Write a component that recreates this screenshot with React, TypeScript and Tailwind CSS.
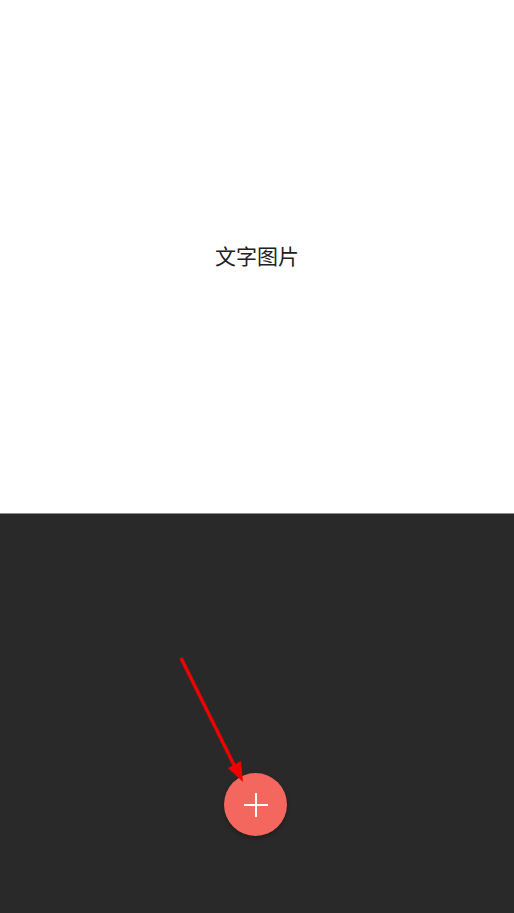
export default function App() {
  return (
    <div className="flex h-[913px] w-[514px] flex-col overflow-hidden bg-white font-['Roboto','Noto_Sans_CJK_SC',sans-serif]">
      <div className="flex h-[513px] items-center justify-center bg-white pt-[1px]">
        <span className="text-[21px] leading-none text-[#212121]">文字图片</span>
      </div>
      <div className="relative flex flex-1 justify-center border-t border-[#8c8c8c] bg-[#292929]">
        <button className="mr-[3px] mt-[259px] flex h-[63px] w-[63px] items-center justify-center rounded-full bg-[#f4675f] shadow-[0_2px_5px_rgba(0,0,0,0.3)]">
          <svg width="24" height="24" viewBox="0 0 24 24" fill="none" stroke="#fff" strokeWidth="2">
            <path d="M12 0v24M0 12h24" />
          </svg>
        </button>
        <svg className="absolute left-[170px] top-[134px]" width="85" height="140" viewBox="0 0 85 140" fill="none">
          <path d="M11 10L67 123" stroke="#f00000" strokeWidth="3.5" />
          <path d="M73 134L58 120L71 113Z" fill="#f00000" />
        </svg>
      </div>
    </div>
  )
}
